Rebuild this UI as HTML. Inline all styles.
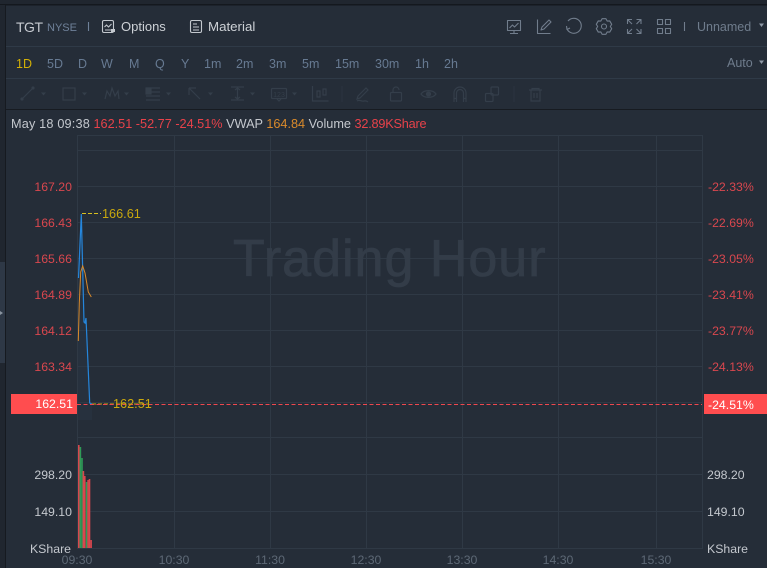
<!DOCTYPE html>
<html><head><meta charset="utf-8"><style>
html,body{margin:0;padding:0;background:#252d38}
body{width:767px;height:568px;position:relative;overflow:hidden;font-family:"Liberation Sans",sans-serif;font-size:12.3px;color:#c8ccd2}
.a{position:absolute;white-space:nowrap;line-height:16px}
.r{color:#e8424a}.y{color:#c9a80e}.o{color:#d98a2b}
.per{top:56px;color:#677a92;font-size:12.500px}
.ll{color:#d9474e;width:72px;left:0;text-align:right;font-size:12.300px}
.rl{color:#d9474e;left:708px;font-size:12.300px}
.g{color:#c4c8ce;font-size:12.300px}
.t{color:#5d6875;top:552px;font-size:12.300px;width:50px;text-align:center}
svg{position:absolute;left:0;top:0}
</style></head><body>
<svg width="767" height="568" fill="none">
<rect x="0" y="0" width="767" height="4" fill="#20262f"/>
<rect x="0" y="4" width="767" height="1.500" fill="#14181e"/>
<rect x="0" y="5" width="5" height="563" fill="#20262f"/>
<rect x="5" y="5" width="1" height="563" fill="#161a20"/>
<rect x="0" y="262" width="5" height="101" fill="#2e3846"/>
<path d="M0 311l3 2-3 2z" fill="#8a94a0"/>
<rect x="6" y="46" width="761" height="1" fill="#2f3a47"/>
<rect x="6" y="78" width="761" height="1" fill="#2f3a47"/>
<rect x="6" y="109" width="761" height="1" fill="#171b21"/>
<g stroke="#2f3945" stroke-width="1">
<path d="M77.500 136V548M174.500 136V548M270.500 136V548M366.500 136V548M462.500 136V548M558.500 136V548M656.500 136V548M702.500 136V548"/>
<path d="M77 135.500H703M77 150.500H703M77 186.500H703M77 222.500H703M77 258.500H703M77 294.500H703M77 330.500H703M77 366.500H703M77 402.500H703M77 437.500H703M77 474.500H703M77 511.500H703M77 548.500H703"/>
</g>
<path d="M78 278L81.300 214L84 322L85 323L86 318L89.700 403L92 404L92 420L78 420Z" fill="#2a3a4a" opacity=".35"/>
<path d="M78.500 278L81.300 214L84 322L85 323L86 318L89.700 403L92 404" stroke="#2586dc" stroke-width="1.200"/>
<path d="M78.300 341L79.300 303L80.700 272L82.700 266L85 273L88.300 292L91.300 297" stroke="#d98a2b" stroke-width="1"/>
<path d="M82 213.500H101" stroke="#d8c020" stroke-width="1" stroke-dasharray="4 2"/>
<path d="M92 404H148" stroke="#c9a80e" stroke-width="1" stroke-dasharray="4 2"/>
<path d="M77 404.500H702" stroke="#f0484e" stroke-width="1" stroke-dasharray="4 2.500"/>
<rect x="11" y="394" width="66" height="20" fill="#ff4d4f"/>
<rect x="704" y="394" width="63" height="20" fill="#ff4d4f"/>
<g>
<rect x="78" y="445" width="1.600" height="103" fill="#d9474e"/>
<rect x="79.600" y="447" width="1.600" height="101" fill="#2f9a57"/>
<rect x="81.200" y="458" width="1.600" height="90" fill="#2f9a57"/>
<rect x="82.600" y="471" width="1.600" height="77" fill="#d9474e"/>
<rect x="84" y="476" width="1.600" height="72" fill="#d9474e"/>
<rect x="85.800" y="482" width="1.600" height="66" fill="#2f9a57"/>
<rect x="87.300" y="480" width="1.600" height="68" fill="#d9474e"/>
<rect x="88.700" y="479" width="1.600" height="69" fill="#d9474e"/>
<rect x="90.300" y="540" width="1.600" height="8" fill="#d9474e"/>
</g>
<!-- header icons left -->
<g stroke="#c3c8ce" stroke-width="1.100">
<rect x="102.500" y="20.500" width="11" height="12" rx="1.500"/>
<path d="M104.500 27l2-2 2 2 3-3M105 30h6"/>
<rect x="111" y="29" width="4" height="3" fill="#c3c8ce" stroke="none"/>
<rect x="190.500" y="20.500" width="11" height="12" rx="1.500"/>
<path d="M193 24h4M193 27h6M193 30h6"/>
</g>
<!-- header icons right -->
<g stroke="#717d8c" stroke-width="1.100" stroke-linejoin="round">
<rect x="507.500" y="20.500" width="13" height="10"/>
<path d="M509.500 28l3-3 2 2 4-4M514 31v3M510 33.500h8"/>
<path d="M537.500 19.500v14h13M541 30l1-3 7-7 2 2-7 7z"/>
<path d="M567 29a7.500 7.500 0 1 0 1-8M566.500 26l.5 3.500 3-1.500"/>
<path d="M605.900 18.700L602.100 18.700L600.850 21.050L598.250 20.940L596.300 24.300L597.700 26.500L596.300 28.700L598.250 32.060L600.850 31.950L602.100 34.300L605.900 34.300L607.150 31.950L609.750 32.060L611.700 28.700L610.300 26.500L611.700 24.300L609.750 20.940L607.150 21.050Z"/>
<circle cx="604" cy="26.500" r="2.500"/>
<path d="M627.500 24v-4.500h4.500M627.500 19.500l4.500 4.500M641 24v-4.500h-4.500M641 19.500l-4.500 4.500M627.500 29v4.500h4.500M627.500 33.500l4.500-4.500M641 29v4.500h-4.500M641 33.500l-4.500-4.500"/>
<rect x="657.500" y="19.500" width="5" height="5"/><rect x="665.500" y="19.500" width="5" height="5"/><rect x="657.500" y="28.500" width="5" height="5"/><rect x="665.500" y="28.500" width="5" height="5"/>
<path d="M684.500 22v9"/>
<path d="M88.500 22v9" stroke="#6f8199"/>
</g>
<path d="M759 23.500h5l-2.500 3.500zM759 60.500h5l-2.500 3.500z" fill="#8f99a6"/>
<!-- toolbar dim -->
<g stroke="#343e4a" stroke-width="1.200">
<path d="M22 99L33 88"/><circle cx="22" cy="99" r="1" fill="#343e4a"/><circle cx="33" cy="88" r="1" fill="#343e4a"/>
<rect x="63" y="88" width="12" height="12"/>
<path d="M105 99l2-8 3 5 2-8 3 8 3-5 1 8"/>
<path d="M146 88h14M146 92h14M146 96h14M146 100h14"/>
<rect x="146" y="88" width="5" height="6" fill="#343e4a"/>
<path d="M189 88l11 11M189 88v7M189 88h7"/>
<path d="M231 87h13M231 100h13M237.500 88v11M235 90l2.500-2 2.500 2M235 97l2.500 2 2.500-2"/>
<rect x="271.500" y="88.500" width="15" height="10" rx="1"/><path d="M277 99l2 2 2-2"/>
<path d="M312.500 86v15h16M317 91v6h3v-6zM323 89v6h3v-6z"/>
<path d="M357 101c3-2 4 1 7 0 2-.5 3 0 4 1M358 96l8-8 2 2-8 8-3 1z"/>
<rect x="390.500" y="92.500" width="11" height="8.500" rx="1"/><path d="M393 92v-2a3 3 0 0 1 6 0"/>
<path d="M421 94c3-4.500 12-4.500 15 0-3 4.500-12 4.500-15 0z"/><circle cx="428.500" cy="94" r="2" fill="#343e4a"/>
<path d="M454 102V93a6 6 0 0 1 12 0v9M454 98.500h2.500M463.500 98.500h2.500M456.500 102V93a3.500 3.500 0 0 1 7 0v9"/>
<rect x="485.500" y="93.500" width="7.500" height="8" rx="1"/><rect x="491" y="87" width="7.500" height="8" rx="1"/>
<path d="M529 90h13M532 90v-1.500h7V90M531 90v11h9V90M534 93v5M537 93v5"/>
</g>
<path d="M342 86v16M514 86v16" stroke="#2b3440"/>
<path d="M41 92.500h5l-2.500 3zM82 92.500h5l-2.500 3zM124 92.500h5l-2.500 3zM166 92.500h5l-2.500 3zM208 92.500h5l-2.500 3zM250 92.500h5l-2.500 3zM292 92.500h5l-2.500 3z" fill="#343e4a"/>
<text x="279" y="97" font-family="Liberation Sans" font-size="7" fill="#343e4a" stroke="none" text-anchor="middle">123</text>
</svg>

<div class="a" style="left:16px;top:19px;font-size:14px;letter-spacing:-.5px;color:#c6cad0">TGT</div>
<div class="a" style="left:47px;top:20px;font-size:11px;color:#6f8199">NYSE</div>
<div class="a" style="left:121px;top:19px;font-size:13px;color:#cdd1d6">Options</div>
<div class="a" style="left:208px;top:19px;font-size:13.300px;color:#cdd1d6">Material</div>
<div class="a" style="left:697px;top:19px;font-size:12.500px;color:#6f7c8c">Unnamed</div>
<div class="a" style="left:727px;top:55px;font-size:12.500px;color:#6f7c8c">Auto</div>

<div class="a per" style="left:16px;color:#d4b106">1D</div>
<div class="a per" style="left:47px">5D</div>
<div class="a per" style="left:78px">D</div>
<div class="a per" style="left:101px">W</div>
<div class="a per" style="left:129px">M</div>
<div class="a per" style="left:155px">Q</div>
<div class="a per" style="left:181px">Y</div>
<div class="a per" style="left:204px">1m</div>
<div class="a per" style="left:236px">2m</div>
<div class="a per" style="left:269px">3m</div>
<div class="a per" style="left:302px">5m</div>
<div class="a per" style="left:335px">15m</div>
<div class="a per" style="left:375px">30m</div>
<div class="a per" style="left:415px">1h</div>
<div class="a per" style="left:444px">2h</div>

<div class="a" style="left:11px;top:116px;font-size:12.700px"><span style="color:#c4c8ce;letter-spacing:.17px">May 18 09:38</span> <span class="r">162.51</span> <span class="r">-52.77</span> <span class="r">-24.51%</span> <span style="color:#c4c8ce">VWAP</span> <span class="o">164.84</span> <span style="color:#c4c8ce">Volume</span> <span class="r" style="letter-spacing:-.2px">32.89KShare</span></div>

<div class="a" style="left:233px;top:232px;font-size:52px;line-height:54px;color:#333c48;letter-spacing:1px;-webkit-text-stroke:.8px #333c48">Trading Hour</div>

<div class="a ll" style="top:179px">167.20</div>
<div class="a ll" style="top:215px">166.43</div>
<div class="a ll" style="top:251px">165.66</div>
<div class="a ll" style="top:287px">164.89</div>
<div class="a ll" style="top:323px">164.12</div>
<div class="a ll" style="top:359px">163.34</div>
<div class="a ll" style="top:396px;color:#fff;width:73px">162.51</div>
<div class="a y" style="left:102px;top:206px;font-size:12.700px">166.61</div>
<div class="a y" style="left:113px;top:396px;font-size:12.700px">162.51</div>

<div class="a rl" style="top:179px">-22.33%</div>
<div class="a rl" style="top:215px">-22.69%</div>
<div class="a rl" style="top:251px">-23.05%</div>
<div class="a rl" style="top:287px">-23.41%</div>
<div class="a rl" style="top:323px">-23.77%</div>
<div class="a rl" style="top:359px">-24.13%</div>
<div class="a rl" style="top:397px;color:#fff">-24.51%</div>

<div class="a g" style="left:0;width:72px;text-align:right;top:467px">298.20</div>
<div class="a g" style="left:0;width:72px;text-align:right;top:504px">149.10</div>
<div class="a g" style="left:0;width:71px;text-align:right;top:541px">KShare</div>
<div class="a g" style="left:707px;top:467px">298.20</div>
<div class="a g" style="left:707px;top:504px">149.10</div>
<div class="a g" style="left:707px;top:541px">KShare</div>

<div class="a t" style="left:52px">09:30</div>
<div class="a t" style="left:149px">10:30</div>
<div class="a t" style="left:245px">11:30</div>
<div class="a t" style="left:341px">12:30</div>
<div class="a t" style="left:437px">13:30</div>
<div class="a t" style="left:533px">14:30</div>
<div class="a t" style="left:631px">15:30</div>
</body></html>
